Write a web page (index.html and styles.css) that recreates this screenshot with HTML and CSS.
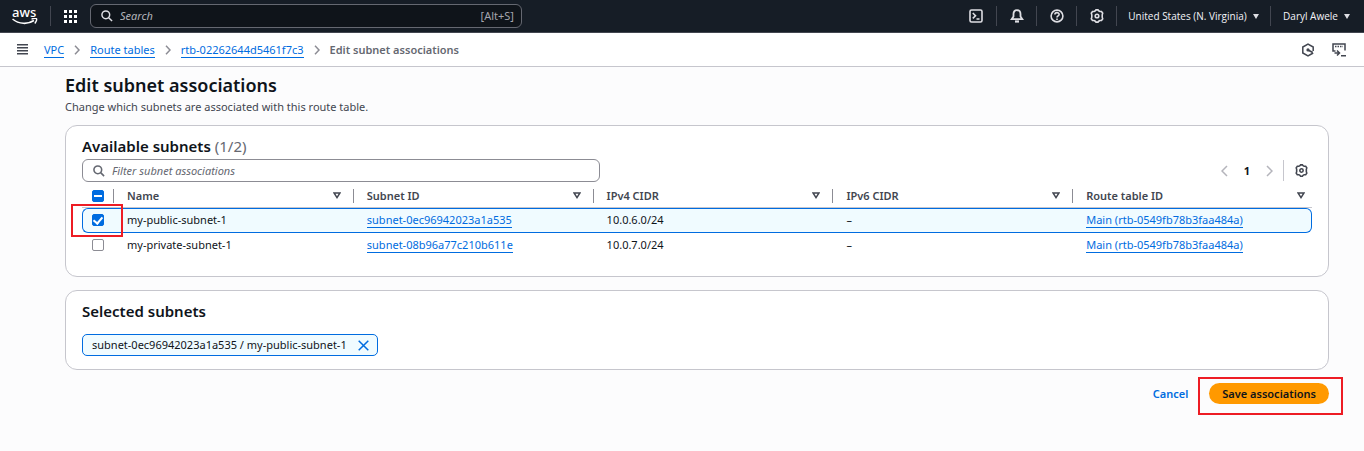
FILE: index.html
```html
<!DOCTYPE html>
<html lang="en">
<head>
<meta charset="utf-8">
<title>Edit subnet associations | VPC</title>
<link rel="stylesheet" href="styles.css">
</head>
<body>
<header class="topbar">
  <a class="logo" href="#" aria-label="AWS home">
    <span class="logo-text">aws</span>
    <svg class="logo-smile" viewBox="0 0 26 8" aria-hidden="true"><path d="M.5 1C7 6.500 16 6.500 22 2.500" fill="none" stroke="#fff" stroke-width="1.600"/><path d="M19.500 1C22 .2 24 .2 24.500 .8S24.200 4 22.800 5.500" fill="none" stroke="#fff" stroke-width="1.400"/></svg>
  </a>
  <button class="services" aria-label="Services">
    <svg width="13" height="13" viewBox="0 0 13 13" fill="#fff"><path d="M0 0h3v3H0zM5 0h3v3H5zM10 0h3v3h-3zM0 5h3v3H0zM5 5h3v3H5zM10 5h3v3h-3zM0 10h3v3H0zM5 10h3v3H5zM10 10h3v3h-3z"/></svg>
  </button>
  <label class="search">
    <svg width="12" height="12" viewBox="0 0 13 13" fill="none" stroke="#dedee3" stroke-width="1.600"><circle cx="5.200" cy="5.200" r="4.200"/><path d="M8.300 8.300L12 12"/></svg>
    <input type="text" placeholder="Search" aria-label="Search">
    <span class="hint">[Alt+S]</span>
  </label>
  <nav class="tools">
    <button class="tool" aria-label="CloudShell"><svg width="14" height="14" viewBox="0 0 14 14" fill="none" stroke="#dedee3" stroke-width="1.600"><rect x="1" y="1" width="12" height="12" rx="1.500"/><path d="M3.800 4L6.500 6.700L3.800 9.400M7.500 10H10.500"/></svg></button>
    <button class="tool" aria-label="Notifications"><svg width="14" height="14" viewBox="0 0 14 14" fill="none" stroke="#dedee3" stroke-width="1.800"><path d="M7 1.200C4.500 1.200 3.500 3 3.500 5V7.500L1.700 10.200H12.300L10.500 7.500V5C10.500 3 9.500 1.200 7 1.200Z"/><path d="M5 12.500H9" stroke-width="2.200"/></svg></button>
    <button class="tool" aria-label="Help"><svg width="14" height="14" viewBox="0 0 14 14" fill="none" stroke="#dedee3" stroke-width="1.600"><circle cx="7" cy="7" r="5.900"/><path d="M4.900 5.500C4.900 3 9.100 3 9.100 5.400C9.100 6.900 7 6.900 7 8.500M7 9.600V11"/></svg></button>
    <button class="tool" aria-label="Settings"><svg width="14" height="14" viewBox="0 0 14 14" fill="none" stroke="#dedee3" stroke-width="1.600"><path d="M5.300 1.800L6 .9H8L8.700 1.800L9.900 2.500H11.500L12.700 4.200L12.200 5.800V8.200L12.700 9.800L11.500 11.500H9.900L8.700 12.200L8 13.100H6L5.300 12.200L4.100 11.500H2.500L1.300 9.800L1.800 8.200V5.800L1.300 4.200L2.500 2.500H4.100Z"/><circle cx="7" cy="7" r="1.800"/></svg></button>
    <button class="tool menu">United States (N. Virginia)<i class="caret"></i></button>
    <button class="tool menu account">Daryl Awele<i class="caret"></i></button>
  </nav>
</header>

<div class="crumbbar">
  <button class="burger" aria-label="Open navigation"><svg width="11" height="11" viewBox="0 0 11 11" fill="#424650"><path d="M0 0h11v1.500H0zM0 3h11v1.500H0zM0 6h11v1.500H0zM0 9h11v1.500H0z"/></svg></button>
  <nav class="crumbs" aria-label="Breadcrumbs">
    <a class="link" href="#">VPC</a>
    <svg class="chev" viewBox="0 0 6 10"><path d="M1 .8L5 5L1 9.200"/></svg>
    <a class="link" href="#">Route tables</a>
    <svg class="chev" viewBox="0 0 6 10"><path d="M1 .8L5 5L1 9.200"/></svg>
    <a class="link" href="#">rtb-02262644d5461f7c3</a>
    <svg class="chev" viewBox="0 0 6 10"><path d="M1 .8L5 5L1 9.200"/></svg>
    <span class="current">Edit subnet associations</span>
  </nav>
  <div class="panels">
    <button aria-label="Assistant"><svg width="14" height="14" viewBox="0 0 14 14" fill="none" stroke="#424650" stroke-width="1.500"><path d="M12.200 8V4L7 1.100L1.800 4V10L7 12.900L12.200 10"/><path d="M7 7L11.800 9.500" stroke-width="1.800"/><circle cx="7" cy="6.900" r="1.600" fill="#424650" stroke="none"/></svg></button>
    <button aria-label="Open shell"><svg width="14" height="14" viewBox="0 0 14 14" fill="none" stroke="#424650" stroke-width="1.500"><path d="M3.500 8H1V1H13V7.500"/><path d="M3 3.500H11" stroke-dasharray="1.500 1"/><path d="M2.500 10H7M5 7.500L7.500 10L5 12.500M9 12.800H14"/></svg></button>
  </div>
</div>

<main class="page">
  <h1>Edit subnet associations</h1>
  <p class="lead">Change which subnets are associated with this route table.</p>

  <section class="card available">
    <h2>Available subnets <span class="count">(1/2)</span></h2>
    <div class="toolbar">
      <label class="filter">
        <svg width="12" height="12" viewBox="0 0 13 13" fill="none" stroke="#656871" stroke-width="1.700"><circle cx="5.200" cy="5.200" r="4.200"/><path d="M8.300 8.300L12 12"/></svg>
        <input type="text" placeholder="Filter subnet associations" aria-label="Filter subnet associations">
      </label>
      <div class="pager">
        <button aria-label="Previous page"><svg class="arrow" viewBox="0 0 7 12"><path d="M6 1L1 6L6 11"/></svg></button>
        <button class="num">1</button>
        <button aria-label="Next page"><svg class="arrow" viewBox="0 0 7 12"><path d="M1 1L6 6L1 11"/></svg></button>
        <button class="prefs" aria-label="Preferences"><svg width="13" height="13" viewBox="0 0 14 14" fill="none" stroke="#424650" stroke-width="1.700"><path d="M5.300 1.800L6 .9H8L8.700 1.800L9.900 2.500H11.500L12.700 4.200L12.200 5.800V8.200L12.700 9.800L11.500 11.500H9.900L8.700 12.200L8 13.100H6L5.300 12.200L4.100 11.500H2.500L1.300 9.800L1.800 8.200V5.800L1.300 4.200L2.500 2.500H4.100Z"/><circle cx="7" cy="7" r="1.800"/></svg></button>
      </div>
    </div>
    <table class="subnets">
      <thead>
        <tr>
          <th class="pick"><input type="checkbox" class="check mixed" checked aria-label="Select all subnets"></th>
          <th><div class="head">Name<svg class="sort" viewBox="0 0 8 7"><path d="M1 1H7L4 5.600Z"/></svg></div></th>
          <th><div class="head">Subnet ID<svg class="sort" viewBox="0 0 8 7"><path d="M1 1H7L4 5.600Z"/></svg></div></th>
          <th><div class="head">IPv4 CIDR<svg class="sort" viewBox="0 0 8 7"><path d="M1 1H7L4 5.600Z"/></svg></div></th>
          <th><div class="head">IPv6 CIDR<svg class="sort" viewBox="0 0 8 7"><path d="M1 1H7L4 5.600Z"/></svg></div></th>
          <th><div class="head">Route table ID<svg class="sort" viewBox="0 0 8 7"><path d="M1 1H7L4 5.600Z"/></svg></div></th>
        </tr>
      </thead>
      <tbody>
        <tr class="selected">
          <td class="pick"><input type="checkbox" class="check" checked aria-label="Select my-public-subnet-1"><span class="callout callout-check"></span></td>
          <td>my-public-subnet-1</td>
          <td><a class="link" href="#">subnet-0ec96942023a1a535</a></td>
          <td>10.0.6.0/24</td>
          <td>–</td>
          <td><a class="link" href="#">Main (rtb-0549fb78b3faa484a)</a></td>
        </tr>
        <tr>
          <td class="pick"><input type="checkbox" class="check" aria-label="Select my-private-subnet-1"></td>
          <td>my-private-subnet-1</td>
          <td><a class="link" href="#">subnet-08b96a77c210b611e</a></td>
          <td>10.0.7.0/24</td>
          <td>–</td>
          <td><a class="link" href="#">Main (rtb-0549fb78b3faa484a)</a></td>
        </tr>
      </tbody>
    </table>
  </section>

  <section class="card chosen">
    <h2>Selected subnets</h2>
    <span class="token">subnet-0ec96942023a1a535 / my-public-subnet-1
      <button aria-label="Remove my-public-subnet-1"><svg width="11" height="11" viewBox="0 0 11 11" fill="none" stroke="#006ce0" stroke-width="1.500"><path d="M.7 .7L10.300 10.300M10.300 .7L.7 10.300"/></svg></button>
    </span>
  </section>

  <div class="actions">
    <button class="cancel">Cancel</button>
    <div class="save-wrap"><button class="save">Save associations</button><span class="callout callout-save"></span></div>
  </div>
</main>
</body>
</html>
```
FILE: styles.css
```css
* { box-sizing: border-box; }
body {
  margin: 0;
  min-height: 100vh;
  background: #fcfcfd;
  color: #0f141a;
  font: 11px/16px "Noto Sans", "Open Sans", sans-serif;
}
button { margin: 0; padding: 0; border: 0; background: none; color: inherit; font: inherit; }
input { font: inherit; }
svg { display: block; flex: none; }
h1, h2, p { margin: 0; }

.topbar {
  display: flex;
  align-items: center;
  height: 33px;
  background: #161d26;
  border-bottom: 1px solid #424650;
  color: #f3f3f7;
}
.logo {
  width: 51px;
  height: 20px;
  padding-left: 12px;
  border-right: 1px solid #424650;
  color: #fff;
  text-decoration: none;
}
.logo-text { display: block; font-size: 13px; line-height: 12px; font-weight: 500; }
.logo-smile { width: 26px; height: 8px; }
.services { margin: 0 13px; }
.search {
  display: flex;
  align-items: center;
  gap: 7px;
  width: 432px;
  height: 24px;
  padding: 0 7px 0 10px;
  border: 1px solid #656871;
  border-radius: 6px;
  background: #0f141a;
}
.search input, .filter input {
  flex: 1;
  min-width: 0;
  padding: 0;
  border: 0;
  outline: 0;
  background: none;
  color: inherit;
}
.search input::placeholder { color: #b4b4bb; font-style: italic; opacity: 1; }
.hint { color: #a4a4ad; }
.tools { display: flex; align-items: center; margin-left: auto; padding-right: 2px; }
.tool { display: flex; align-items: center; justify-content: center; width: 40px; height: 20px; border-left: 1px solid #424650; }
.tool:first-child { border-left: 0; }
.menu { width: 154px; gap: 6px; font-family: "Open Sans", sans-serif; font-size: 10px; font-weight: 500; }
.account { width: 92px; }
.caret { border: 3px solid transparent; border-top: 5px solid #dedee3; border-bottom: 0; }

.crumbbar {
  display: flex;
  align-items: center;
  height: 34px;
  padding: 0 18px 0 17px;
  background: #fff;
  border-bottom: 1px solid #c6c6cd;
}
.crumbs { display: flex; align-items: center; gap: 10px; margin-left: 16px; }
.link { color: #006ce0; text-decoration: none; border-bottom: 1px solid #006ce0; line-height: 14px; }
.chev { width: 6px; height: 10px; fill: none; stroke: #8c8c94; stroke-width: 1.5; }
.crumbs .link { padding-top: 1px; }
.current { color: #656871; font-weight: 600; }
.panels { display: flex; gap: 17px; margin-left: auto; }

.page { padding: 6px 35px 40px 65px; }
h1 { font-size: 18px; line-height: 24px; font-weight: 600; }
.lead { margin-top: 2px; color: #424650; }
.card { padding: 10px 16px; background: #fff; border: 1px solid #c6c6cd; border-radius: 12px; }
h2 { font-size: 15px; line-height: 20px; font-weight: 600; }
.count { color: #656871; font-weight: 400; }
.available { margin-top: 10px; padding-bottom: 18px; }
.toolbar { display: flex; align-items: center; justify-content: space-between; margin-top: 3px; }
.filter {
  display: flex;
  align-items: center;
  gap: 7px;
  width: 42.1%;
  height: 23px;
  padding: 0 10px;
  border: 1px solid #8c8c94;
  border-radius: 6px;
}
.filter input::placeholder { color: #656871; font-style: italic; opacity: 1; }
.pager { display: flex; align-items: center; gap: 16px; padding-right: 4px; }
.arrow { width: 7px; height: 12px; fill: none; stroke: #b4b4bb; stroke-width: 1.5; }
.num { font-weight: 700; }
.prefs { margin-left: -6px; padding: 4px 0 4px 11px; border-left: 1px solid #c6c6cd; }

.subnets { width: 100%; table-layout: fixed; border-collapse: separate; border-spacing: 0; }
.subnets th, .subnets td { height: 25px; padding: 0 0 2px 14px; text-align: left; vertical-align: middle; }
.subnets th { height: 26px; padding-top: 3px; padding-bottom: 1px; color: #424650; border-bottom: 1px solid #c6c6cd; font-weight: 600; }
.subnets .pick { position: relative; width: 31px; padding-left: 10px; }
.head { display: flex; align-items: center; justify-content: space-between; height: 14px; margin-left: -14px; padding: 0 12px 0 13px; border-left: 1px solid #8c8c94; }
.sort { width: 8px; height: 7px; fill: none; stroke: #424650; stroke-width: 1.5; }
th:last-child .head { padding-right: 7px; }
.selected td { background: #f0fbff; border: 1px solid #006ce0; border-width: 1px 0; }
.selected td:first-child { border-left-width: 1px; border-radius: 6px 0 0 6px; }
.selected .pick.pick { padding-left: 9px; }
.selected td:last-child { border-right-width: 1px; border-radius: 0 6px 6px 0; }
.check {
  appearance: none;
  display: grid;
  place-items: center;
  width: 12px;
  height: 12px;
  margin: 0;
  border: 1px solid #8c8c94;
  border-radius: 2px;
  background: #fff;
}
.check:checked { background: #006ce0; border-color: #006ce0; }
.check:checked::after { content: ""; width: 4px; height: 7px; margin-bottom: 2px; border: solid #fff; border-width: 0 2px 2px 0; transform: rotate(40deg); }
.check.mixed:checked::after { width: 8px; height: 2px; margin: 0; border: 0; background: #fff; transform: none; }

.chosen { margin-top: 13px; padding-bottom: 13px; }
.token {
  display: inline-flex;
  align-items: center;
  gap: 11px;
  height: 22px;
  margin-top: 13px;
  padding: 0 8px 0 9px;
  background: #f0fbff;
  border: 1px solid #006ce0;
  border-radius: 5px;
  vertical-align: top;
}
.actions { display: flex; align-items: center; justify-content: flex-end; gap: 21px; margin-top: 13px; font-weight: 600; }
.cancel { color: #006ce0; }
.save-wrap { position: relative; }
.save { display: block; height: 21px; padding: 0 13px; border-radius: 11px; background: #ff9900; }
.callout { position: absolute; border: 2px solid #ed1c24; pointer-events: none; }
.callout-check { inset: -5px -10px -5px -12px; z-index: 1; }
.callout-save { inset: -6px -14px -11px -11px; }
```
